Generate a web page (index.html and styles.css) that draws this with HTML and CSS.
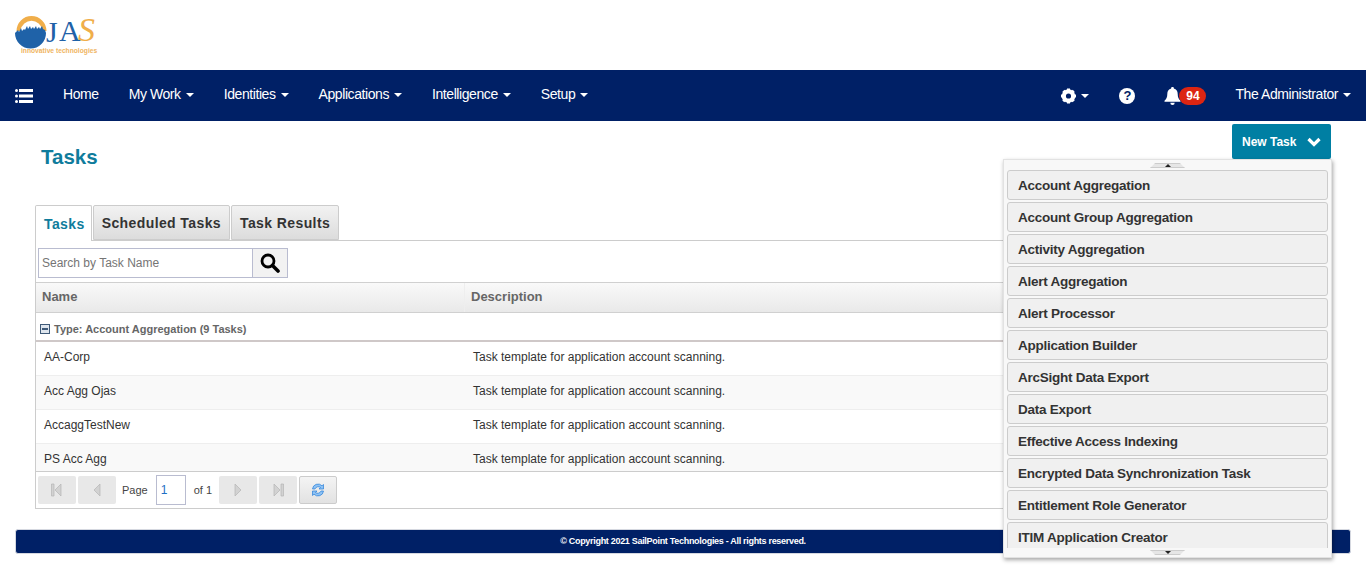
FILE: index.html
```html
<!DOCTYPE html>
<html lang="en">

<head>
    <meta charset="UTF-8">
    <meta name="viewport" content="width=device-width, initial-scale=1.0">
    <title>Tasks</title>
    <link rel="stylesheet" href="styles.css">
</head>

<body>
    <header class="logo-bar">
        <svg class="logo" width="100" height="50" viewBox="0 0 100 50">
            <path d="M1.500 21a15 15 0 0 1 30 0h-3.500a12 14.500 0 0 0-23 0z" fill="#f0ae4a" />
            <path d="M1 22l2-2 1 2 2-4 1 3 2-2 1 1 2-4 1 3 2-3 1 3 2-2 1 2 2-3 1 3 2-2 1 2 2-3 1 3 2 1 1 3a15.500 15.500 0 0 1-31 0z" fill="#1f62a8" />
            <text class="logo-letters" x="31" y="32" fill="#1f62a8">J</text>
            <text class="logo-letters" x="44" y="31" fill="#1f62a8">A</text>
            <text class="logo-letters logo-s" x="63" y="31" fill="#f0ae4a">S</text>
            <text class="logo-tag" x="6" y="43">innovative technologies</text>
        </svg>
    </header>

    <nav class="navbar">
        <svg class="nav-list" width="18" height="14" viewBox="0 0 18 14">
            <path d="M0 1.500a1.500 1.500 0 0 1 3 0a1.500 1.500 0 0 1-3 0zM0 7a1.500 1.500 0 0 1 3 0a1.500 1.500 0 0 1-3 0zM0 12.500a1.500 1.500 0 0 1 3 0a1.500 1.500 0 0 1-3 0z" fill="#fff" />
            <path d="M4 0h14v3H4zM4 5.500h14v3H4zM4 11h14v3H4z" fill="#fff" />
        </svg>
        <ul class="nav-links">
            <li>Home</li>
            <li>My Work<span class="caret"></span></li>
            <li>Identities<span class="caret"></span></li>
            <li>Applications<span class="caret"></span></li>
            <li>Intelligence<span class="caret"></span></li>
            <li>Setup<span class="caret"></span></li>
        </ul>
        <div class="nav-right">
            <div class="nav-gear">
                <svg width="15" height="16" viewBox="0 0 16 16">
                    <circle cx="8" cy="8" r="5" fill="none" stroke="#fff" stroke-width="4.500" />
                    <path d="M6.400 0h3.200v3H6.400zM6.400 13h3.200v3H6.400zM0 6.400h3v3.200H0zM13 6.400h3v3.200h-3zM1.300 3.600l2.300-2.300 2.100 2.100-2.300 2.300zM10.300 12.600l2.300-2.300 2.100 2.100-2.300 2.300zM12.600 1.300l2.100 2.300-2.100 2.100-2.300-2.300zM3.600 10.300l2.100 2.300-2.300 2.100-2.100-2.300z" fill="#fff" />
                </svg>
                <span class="caret"></span>
            </div>
            <span class="nav-help">?</span>
            <div class="nav-bell">
                <svg width="17" height="18" viewBox="0 0 17 18">
                    <path d="M8.500 0a1.300 1.300 0 0 1 1.300 1.600c2.700.6 3.900 2.800 3.900 5.400 0 3.500 1 5 2.800 6.800v1H.5v-1C2.300 12 3.300 10.500 3.300 7c0-2.600 1.200-4.800 3.900-5.400A1.300 1.300 0 0 1 8.500 0zM6.300 15.800h4.400a2.200 2.200 0 0 1-4.400 0z" fill="#fff" />
                </svg>
                <span class="badge">94</span>
            </div>
            <div class="nav-user">The Administrator<span class="caret"></span></div>
        </div>
    </nav>

    <main class="page">
        <div class="page-top">
            <h1 class="page-title">Tasks</h1>
            <div class="new-task">
                <button class="new-task-btn">New Task
                    <svg width="14" height="10" viewBox="0 0 14 10">
                        <path d="M1.500 2l5.500 5.500L12.500 2" fill="none" stroke="#fff" stroke-width="3.200" />
                    </svg>
                </button>
                <div class="task-menu">
                    <div class="scroll-tab scroll-up"><span></span></div>
                    <ul class="task-list">
                        <li>Account Aggregation</li>
                        <li>Account Group Aggregation</li>
                        <li>Activity Aggregation</li>
                        <li>Alert Aggregation</li>
                        <li>Alert Processor</li>
                        <li>Application Builder</li>
                        <li>ArcSight Data Export</li>
                        <li>Data Export</li>
                        <li>Effective Access Indexing</li>
                        <li>Encrypted Data Synchronization Task</li>
                        <li>Entitlement Role Generator</li>
                        <li>ITIM Application Creator</li>
                    </ul>
                    <div class="scroll-tab scroll-down"><span></span></div>
                </div>
            </div>
        </div>

        <div class="tabs">
            <div class="tab active">Tasks</div>
            <div class="tab">Scheduled Tasks</div>
            <div class="tab">Task Results</div>
        </div>

        <section class="panel">
            <div class="search-row">
                <input class="search-input" type="text" placeholder="Search by Task Name">
                <button class="search-btn">
                    <svg width="20" height="20" viewBox="0 0 20 20">
                        <circle cx="8" cy="8" r="6" fill="none" stroke="#000" stroke-width="2.800" />
                        <path d="M12.500 12.500l5.500 5.500" stroke="#000" stroke-width="3.600" stroke-linecap="round" />
                    </svg>
                </button>
            </div>
            <div class="grid-head">
                <div class="col-name">Name</div>
                <div class="col-desc">Description</div>
            </div>
            <div class="group-row">
                <svg width="10" height="10" viewBox="0 0 10 10">
                    <rect x=".5" y=".5" width="9" height="9" fill="#dfe6ee" stroke="#3f5a78" />
                    <rect x="2" y="4" width="6" height="2" fill="#3f5a78" />
                </svg>
                Type: Account Aggregation (9 Tasks)
            </div>
            <div class="grid-body">
                <div class="grid-row">
                    <div class="col-name">AA-Corp</div>
                    <div class="col-desc">Task template for application account scanning.</div>
                </div>
                <div class="grid-row alt">
                    <div class="col-name">Acc Agg Ojas</div>
                    <div class="col-desc">Task template for application account scanning.</div>
                </div>
                <div class="grid-row">
                    <div class="col-name">AccaggTestNew</div>
                    <div class="col-desc">Task template for application account scanning.</div>
                </div>
                <div class="grid-row alt">
                    <div class="col-name">PS Acc Agg</div>
                    <div class="col-desc">Task template for application account scanning.</div>
                </div>
            </div>
            <div class="pager">
                <button class="pager-btn">
                    <svg width="14" height="14" viewBox="0 0 14 14">
                        <path d="M1.500 1h2.500v12H1.500zM11 1v12L5 7z" fill="#d2d2d2" stroke="#b4b4b4" stroke-width=".7" />
                    </svg>
                </button>
                <button class="pager-btn">
                    <svg width="14" height="14" viewBox="0 0 14 14">
                        <path d="M10 1v12L4 7z" fill="#d2d2d2" stroke="#b4b4b4" stroke-width=".7" />
                    </svg>
                </button>
                <span class="pager-label">Page</span>
                <input class="pager-input" type="text" value="1">
                <span class="pager-label pager-of">of 1</span>
                <button class="pager-btn">
                    <svg width="14" height="14" viewBox="0 0 14 14">
                        <path d="M4 1v12l6-6z" fill="#d2d2d2" stroke="#b4b4b4" stroke-width=".7" />
                    </svg>
                </button>
                <button class="pager-btn">
                    <svg width="14" height="14" viewBox="0 0 14 14">
                        <path d="M12.500 1H10v12h2.500zM3 1v12l6-6z" fill="#d2d2d2" stroke="#b4b4b4" stroke-width=".7" />
                    </svg>
                </button>
                <button class="pager-btn refresh">
                    <svg width="16" height="16" viewBox="0 0 16 16">
                        <path d="M2.500 7a5.500 5.500 0 0 1 9.500-3.200l1.500-1.300V7H9l1.500-1.500A3.500 3.500 0 0 0 5 7z" fill="#8ec2f4" stroke="#2a7fd8" stroke-width=".7" />
                        <path d="M13.500 9a5.500 5.500 0 0 1-9.500 3.200l-1.500 1.300V9H7l-1.500 1.500A3.500 3.500 0 0 0 11 9z" fill="#8ec2f4" stroke="#2a7fd8" stroke-width=".7" />
                    </svg>
                </button>
            </div>
        </section>

        <footer class="site-footer">© Copyright 2021 SailPoint Technologies - All rights reserved.</footer>
    </main>
</body>

</html>
```

FILE: styles.css
```css
* {
    box-sizing: border-box;
}

body {
    margin: 0;
    background-color: #fff;
    color: #333;
    font-family: "Liberation Sans", Arial, sans-serif;
    font-size: 12px;
}

ul {
    list-style: none;
    margin: 0;
    padding: 0;
}

button {
    font-family: inherit;
}

.logo-bar {
    height: 70px;
    padding: 10px 0 0 15px;
}

.logo {
    display: block;
}

.logo-letters {
    font-family: "Liberation Serif", serif;
    font-size: 30px;
}

.logo-s {
    font-size: 34px;
    font-style: italic;
}

.logo-tag {
    font-family: "Liberation Sans", sans-serif;
    font-size: 6.7px;
    font-weight: bold;
    fill: #f0b562;
}

/* navbar */
.navbar {
    display: flex;
    align-items: center;
    height: 51px;
    padding: 0 15px;
    background-color: #002066;
    color: #fff;
    font-size: 14px;
    letter-spacing: -0.42px;
}

.nav-list {
    margin-right: 15px;
}

.nav-links {
    display: flex;
    padding-bottom: 3px;
}

.nav-links li {
    padding: 0 15px;
}

.caret {
    display: inline-block;
    margin-left: 5px;
    vertical-align: middle;
    border-top: 4px solid #fff;
    border-left: 4px solid transparent;
    border-right: 4px solid transparent;
}

.nav-right {
    display: flex;
    align-items: center;
    margin-left: auto;
}

.nav-gear {
    display: flex;
    align-items: center;
}

.nav-help {
    width: 16px;
    height: 16px;
    margin: 0 29px 0 30px;
    border-radius: 50%;
    background-color: #fff;
    color: #002066;
    font-size: 13px;
    font-weight: bold;
    letter-spacing: 0;
    line-height: 16px;
    text-align: center;
}

.nav-bell {
    display: flex;
    align-items: center;
}

.badge {
    width: 27px;
    height: 18px;
    margin-left: -2px;
    border-radius: 9px;
    background-color: #dc2512;
    font-size: 12px;
    font-weight: bold;
    letter-spacing: 0;
    line-height: 18px;
    text-align: center;
}

.nav-user {
    margin-left: 29px;
    padding-bottom: 3px;
}

/* page */
.page {
    min-height: 460px;
    padding: 0 15px;
}

.page-top {
    display: flex;
    justify-content: space-between;
    align-items: flex-start;
    height: 84px;
    padding: 3px 20px 0 26px;
}

.page-title {
    margin: 23px 0 0;
    color: #0f7c9c;
    font-size: 20.5px;
    line-height: 20px;
}

.new-task {
    position: relative;
}

.new-task-btn {
    display: flex;
    align-items: center;
    gap: 11px;
    width: 99px;
    height: 35px;
    padding: 0 0 0 10px;
    border: 0;
    border-radius: 2px;
    background-color: #007fa3;
    color: #fff;
    font-size: 12px;
    font-weight: bold;
}

.task-menu {
    position: absolute;
    top: 35px;
    right: -1px;
    z-index: 5;
    width: 329px;
    height: 399px;
    padding: 10px 3px 0;
    background-color: #f8f8f8;
    border: 1px solid #e2e2e2;
    box-shadow: 1px 2px 4px rgba(0, 0, 0, 0.35);
}

.task-list {
    height: 378px;
    overflow: hidden;
}

.task-list li {
    height: 30px;
    margin-bottom: 2px;
    padding-left: 10px;
    background-color: #f0f0f0;
    border: 1px solid #ccc;
    border-radius: 3px;
    color: #333;
    font-size: 13.5px;
    font-weight: bold;
    letter-spacing: -0.25px;
    line-height: 30px;
}

.scroll-tab {
    position: absolute;
    left: 146px;
    width: 35px;
    height: 5px;
    background-color: #e6e6e6;
    border: 1px solid #ccc;
}

.scroll-tab span {
    display: block;
    width: 0;
    margin: 0 auto;
    border-left: 3px solid transparent;
    border-right: 3px solid transparent;
}

.scroll-up {
    top: 3px;
    clip-path: polygon(15% 0, 85% 0, 100% 100%, 0 100%);
}

.scroll-up span {
    border-bottom: 3px solid #222;
}

.scroll-down {
    top: 390px;
    clip-path: polygon(0 0, 100% 0, 85% 100%, 15% 100%);
}

.scroll-down span {
    border-top: 3px solid #222;
}

/* tabs */
.tabs {
    display: flex;
    gap: 1px;
    height: 36px;
    margin: 0 20px;
    position: relative;
    z-index: 1;
}

.tab {
    height: 35px;
    padding: 0 8px;
    background: linear-gradient(#f2f2f2, #dcdcdc);
    border: 1px solid #ccc;
    border-radius: 2px 2px 0 0;
    color: #333;
    font-size: 14px;
    font-weight: bold;
    letter-spacing: 0.4px;
    line-height: 35px;
}

.tab.active {
    height: 36px;
    padding-right: 6px;
    background: #fff;
    border-bottom: 0;
    color: #0f7c9c;
    line-height: 37px;
}

/* grid */
.panel {
    margin: -1px 20px 0;
    border: 1px solid #ccc;
}

.search-row {
    display: flex;
    height: 41px;
    padding: 7px 0 0 2px;
}

.search-input {
    width: 215px;
    height: 30px;
    padding: 0 3px;
    background: #fff;
    border: 1px solid #b9bcd0;
    border-radius: 0;
    font-family: inherit;
    font-size: 12px;
}

.search-input::placeholder {
    color: #757575;
}

.search-btn {
    display: flex;
    justify-content: center;
    align-items: center;
    width: 35px;
    height: 30px;
    padding: 0;
    background-color: #f2f2f2;
    border: 1px solid #b9bcd0;
    border-left: 0;
}

.grid-head {
    display: flex;
    height: 31px;
    background: linear-gradient(#f9f9f9, #e9e9e9);
    border-top: 1px solid #d0d0d0;
    border-bottom: 1px solid #d0d0d0;
    color: #666;
    font-size: 13px;
    font-weight: bold;
    line-height: 27px;
}

.grid-head .col-name {
    padding-left: 6px;
    border-right: 1px solid #eee;
}

.grid-head .col-desc {
    padding-left: 6px;
}

.col-name {
    width: 429px;
    padding-left: 8px;
}

.col-desc {
    padding-left: 8px;
}

.group-row {
    display: flex;
    align-items: center;
    gap: 4px;
    height: 29px;
    padding: 4px 0 0 4px;
    border-bottom: 2px solid #cfc8c8;
    color: #666;
    font-size: 11px;
    font-weight: bold;
}

.grid-body {
    height: 129px;
    overflow: hidden;
}

.grid-row {
    display: flex;
    height: 34px;
    border-bottom: 1px solid #eee;
    color: #333;
    font-size: 12px;
    line-height: 30px;
}

.grid-row.alt {
    background-color: #f9f9f9;
}

.pager {
    display: flex;
    align-items: center;
    gap: 2px;
    height: 37px;
    padding: 0 2px;
    border-top: 1px solid #ccc;
}

.pager-btn {
    display: flex;
    justify-content: center;
    align-items: center;
    width: 38px;
    height: 28px;
    padding: 0;
    background-color: #e8e8e8;
    border: 0;
    border-radius: 2px;
}

.pager-btn.refresh {
    background: linear-gradient(#f4f4f4, #e2e2e2);
    border: 1px solid #ccc;
}

.pager-label {
    margin: 0 6px 0 4px;
    color: #444;
    font-size: 11px;
}

.pager-of {
    margin: 0 5px 0 6px;
}

.pager-input {
    width: 30px;
    height: 30px;
    padding: 0 4px;
    background: #fff;
    border: 1px solid #b9bcd0;
    border-radius: 0;
    color: #1f6fc4;
    font-family: inherit;
    font-size: 12px;
}

.site-footer {
    height: 25px;
    margin-top: 20px;
    background-color: #002066;
    border: 1px solid #d5d8e0;
    border-radius: 3px;
    color: #fff;
    font-size: 9px;
    font-weight: bold;
    letter-spacing: -0.3px;
    line-height: 22px;
    text-align: center;
}
```
